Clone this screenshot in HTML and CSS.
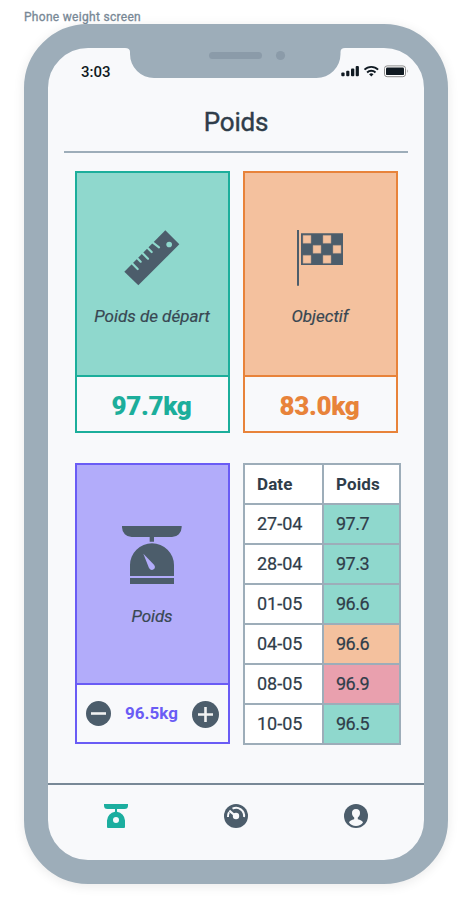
FILE: index.html
```html
<!DOCTYPE html>
<html lang="fr">
<head>
<meta charset="utf-8">
<title>Poids</title>
<link rel="stylesheet" href="styles.css">
</head>
<body>
<div class="label"><span>Phone weight screen</span></div>
<main class="phone">
  <div class="notch">
    <svg width="220" height="32" viewBox="0 0 220 32">
      <path fill="#9dadb9" d="M0 0H220V1Q215.500 1 215.500 5V7A24 24 0 0 1 191.500 31H29A24 24 0 0 1 5 7V5Q5 1 0 1Z"/>
      <rect x="84" y="5" width="53" height="7" rx="3.500" fill="#8b9ba9"/>
      <circle cx="155.500" cy="8.500" r="4.600" fill="#8b9ba9"/>
    </svg>
  </div>
  <div class="status">
    <span class="time">3:03</span>
    <svg class="signals" width="68" height="14" viewBox="0 0 68 14" fill="#101a22">
      <rect x="0.300" y="8.500" width="3.300" height="3.700" rx="1"/>
      <rect x="5.200" y="6.700" width="3.200" height="5.500" rx="1"/>
      <rect x="10" y="4.400" width="3.300" height="7.800" rx="1"/>
      <rect x="14.700" y="2" width="3.200" height="10.200" rx="1"/>
      <g fill="none" stroke="#101a22" stroke-width="1.900">
        <path d="M23.500 5.700A9.500 9.500 0 0 1 37.100 5.700"/>
        <path d="M26.100 8.500A6 6 0 0 1 34.500 8.500"/>
      </g>
      <path d="M28.100 10.200Q30.300 8.500 32.500 10.200L30.300 12.500Z"/>
      <rect x="43.500" y="1.900" width="21" height="10.800" rx="2.600" fill="#fff" stroke="#8c8c8c"/>
      <rect x="45" y="3.500" width="18" height="7.600" rx="1.200"/>
      <path d="M66 5.200Q67.400 7 66 8.900Z" fill="#8c8c8c"/>
    </svg>
  </div>
  <header class="header"><h1>Poids</h1></header>
  <section class="grid">
    <article class="card teal">
      <div class="top">
        <svg width="56" height="56" viewBox="162 195 168 168">
          <path fill="#4c5d6b" d="M286 196L328 238L205 361L163 320Z"/>
          <g stroke="#8fd8cd" stroke-width="6.500" stroke-linecap="round">
            <path d="M183 292L203 312M199 277L212 290M214 261L234 281M230 246L245 261M245 230L267 247"/>
          </g>
          <circle cx="297.500" cy="238.500" r="8.500" fill="#8fd8cd"/>
        </svg>
        <em class="depart">Poids de départ</em>
      </div>
      <strong class="value">97.7kg</strong>
    </article>
    <article class="card orange">
      <div class="top">
        <svg width="56" height="56" viewBox="168 195 168 168">
          <path fill="#4c5d6b" d="M183 195H189V362H183ZM195 205H321V300H195Z"/>
          <path fill="#f4c19e" stroke="#a99185" stroke-width="1.500" d="M201 211H225V235H201ZM261 211H285V235H261ZM231 241H255V265H231ZM291 241H315V265H291ZM201 271H225V295H201ZM261 271H285V295H261Z"/>
        </svg>
        <em class="objectif">Objectif</em>
      </div>
      <strong class="value">83.0kg</strong>
    </article>
    <article class="card purple">
      <div class="top">
        <svg width="60" height="60" viewBox="156 210 180 180" fill="#4c5d6b">
          <path d="M156 213H335V217A29 29 0 0 1 306 246H185A29 29 0 0 1 156 217ZM239 246H252V260H239ZM180 363V330A66 65 0 0 1 312 330V363ZM180 369H312V387H180Z"/>
          <path fill="#b2acfa" d="M220 296L252 329Q258 337 251 343Q243 348 237 339Z"/>
        </svg>
        <em class="poids">Poids</em>
      </div>
      <div class="stepper">
        <svg width="25" height="25" viewBox="0 0 25 25"><circle cx="12.500" cy="12.500" r="12.500" fill="#4c5d6b"/><path d="M5 12.500H20" stroke="#f1f2f2" stroke-width="2.600"/></svg>
        <strong>96.5kg</strong>
        <svg class="plus" width="27" height="27" viewBox="0 0 27 27"><circle cx="13.500" cy="13.500" r="13.500" fill="#4c5d6b"/><path d="M6 13.500H21M13.500 6V21" stroke="#f1f2f2" stroke-width="2.600"/></svg>
      </div>
    </article>
    <table>
      <tr><th>Date</th><th>Poids</th></tr>
      <tr><td>27-04</td><td class="good">97.7</td></tr>
      <tr><td>28-04</td><td class="good">97.3</td></tr>
      <tr><td>01-05</td><td class="good">96.6</td></tr>
      <tr><td>04-05</td><td class="same">96.6</td></tr>
      <tr><td>08-05</td><td class="bad">96.9</td></tr>
      <tr><td>10-05</td><td class="good">96.5</td></tr>
    </table>
  </section>
  <nav class="nav">
    <a><svg width="24" height="24" viewBox="0 0 24 24"><path fill="#1cae9f" fill-rule="evenodd" d="M0 0H24V1.500A3.500 3.500 0 0 1 20.500 5H13V7.800A9 9 0 0 1 21 16.500V23A1 1 0 0 1 20 24H4A1 1 0 0 1 3 23V16.500A9 9 0 0 1 11 7.800V5H3.500A3.500 3.500 0 0 1 0 1.500ZM12 13A3 3 0 1 0 12 19A3 3 0 1 0 12 13Z"/></svg></a>
    <a><svg width="24" height="24" viewBox="0 0 24 24"><circle cx="12" cy="12" r="12" fill="#4c5d6b"/><g fill="none" stroke="#f8f9fb" stroke-width="2"><path d="M8.500 4.700A8 8 0 0 1 20 13"/><path d="M4 13A8.300 8.300 0 0 1 5 8.300"/><path d="M5.300 6.600L11 11.500" stroke-width="2.200"/></g><circle cx="12" cy="12" r="3.200" fill="#f8f9fb"/></svg></a>
    <a><svg width="24" height="24" viewBox="0 0 24 24"><circle cx="12" cy="12" r="12" fill="#4c5d6b"/><path fill="#f8f9fb" d="M12 5C14.800 5 16.200 6.800 16 9.200C15.900 11.300 15 12.600 13.800 13.600V15.200C16.200 16 18.400 16.600 19 18.500C17.500 20.800 15 22 12 22S6.500 20.800 5 18.500C5.600 16.600 7.800 16 10.200 15.200V13.600C9 12.600 8.100 11.300 8 9.200C7.800 6.800 9.200 5 12 5Z"/></svg></a>
  </nav>
</main>
</body>
</html>
```
FILE: styles.css
```css
* { box-sizing: border-box; }
body {
  margin: 0;
  width: 472px;
  height: 908px;
  overflow: hidden;
  background: #fff;
  color: #2f3d4a;
  font-family: Roboto, sans-serif;
}
svg { display: block; flex: none; }
.label {
  height: 24px;
  padding: 10px 0 0 24px;
  color: #788896;
  font-size: 12px;
  font-weight: 400;
  line-height: 14px;
  letter-spacing: 0.3px;
  -webkit-text-stroke: 0.3px;
}
.phone {
  position: relative;
  display: flex;
  flex-direction: column;
  width: 424px;
  height: 860px;
  margin-left: 24px;
  border: 24px solid #9dadb9;
  border-radius: 64px;
  background: #f8f9fb;
  box-shadow: 0 2px 12px rgba(0, 0, 0, 0.09);
}
.notch { position: absolute; left: 77px; top: -1px; }
.status {
  display: flex;
  justify-content: space-between;
  align-items: center;
  height: 46px;
  padding: 0 15px 0 33px;
}
.time { padding-top: 2px; color: #101a22; font-size: 15px; font-weight: 500; }
.header {
  display: flex;
  align-items: center;
  justify-content: center;
  height: 59px;
  margin: 0 16px;
  padding-bottom: 1px;
  border-bottom: 2px solid #9dadb9;
}
h1 {
  margin: 0;
  font-size: 26px;
  font-weight: 400;
  letter-spacing: -0.2px;
  -webkit-text-stroke: 0.4px;
}
.grid {
  display: grid;
  grid-template-columns: 155px 158px;
  grid-template-rows: 262px 282px;
  gap: 30px 13px;
  margin: 18px 0 0 27px;
}
.card {
  display: flex;
  flex-direction: column;
  width: 155px;
  border: 2px solid;
}
.top {
  display: flex;
  flex-direction: column;
  align-items: center;
  height: 204px;
  padding: 57px 1px 0 0;
  border-bottom: 2px solid;
}
.teal { border-color: #1cae9b; }
.teal .top { background: #8fd8cd; border-color: #1cae9b; }
.orange { border-color: #e8833a; }
.orange .top { background: #f4c19e; border-color: #e8833a; }
.purple { height: 281px; border-color: #6a5cf5; }
.purple .top { height: 220px; padding-top: 60px; background: #b2acfa; border-color: #6a5cf5; }
em {
  margin-top: 20px;
  color: #384752;
  font-size: 17px;
  line-height: 20px;
  white-space: nowrap;
  -webkit-text-stroke: 0.2px;
}
.poids { margin-top: 21px; letter-spacing: -0.1px; }
.value {
  flex: 1;
  display: flex;
  align-items: center;
  justify-content: center;
  padding: 3px 2px 0 0;
  font-size: 26px;
  font-weight: 900;
  letter-spacing: -0.35px;
}
.teal .value { color: #1cae9b; }
.orange .value { color: #e8833a; }
.stepper {
  display: flex;
  justify-content: space-between;
  padding: 16px 9px 0;
}
.stepper strong { color: #6a5cf5; font-size: 17px; line-height: 25px; }
table {
  width: 158px;
  height: 282px;
  border-collapse: collapse;
  table-layout: fixed;
  background: #fff;
}
th, td {
  height: 40px;
  padding: 0 0 0 12px;
  border: 2px solid #9dadb9;
  text-align: left;
  font-size: 18px;
  line-height: 20px;
}
td { -webkit-text-stroke: 0.2px; }
td + td { letter-spacing: -0.5px; }
th { font-size: 17px; font-weight: 700; letter-spacing: 0.1px; }
th:first-child { width: 79px; }
.good { background: #8fd8cd; }
.same { background: #f4c19e; }
.bad { background: #e9a0ae; }
.nav {
  display: flex;
  height: 77px;
  margin-top: auto;
  padding: 19px 8px 0;
  border-top: 2px solid #788896;
}
.nav a { display: flex; flex: 1; justify-content: center; }
```
